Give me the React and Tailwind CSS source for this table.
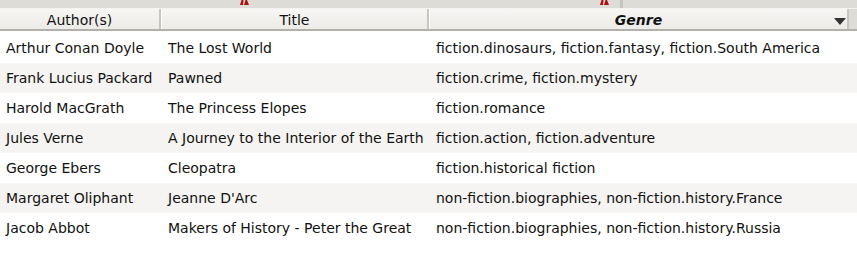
const ROWS = [
  ['Arthur Conan Doyle', 'The Lost World', 'fiction.dinosaurs, fiction.fantasy, fiction.South America'],
  ['Frank Lucius Packard', 'Pawned', 'fiction.crime, fiction.mystery'],
  ['Harold MacGrath', 'The Princess Elopes', 'fiction.romance'],
  ['Jules Verne', 'A Journey to the Interior of the Earth', 'fiction.action, fiction.adventure'],
  ['George Ebers', 'Cleopatra', 'fiction.historical fiction'],
  ['Margaret Oliphant', "Jeanne D'Arc", 'non-fiction.biographies, non-fiction.history.France'],
  ['Jacob Abbot', 'Makers of History - Peter the Great', 'non-fiction.biographies, non-fiction.history.Russia'],
]

function Marker() {
  return (
    <svg width="9" height="5" viewBox="0 0 9 5" className="block">
      <path d="M0 5 L1.5 0 L3.5 0 L3 5 Z M4 5 L5.5 0 L7 0 L9 5 Z" fill="#b01010" />
    </svg>
  )
}

export default function App() {
  return (
    <div className="w-[857px] h-[259px] bg-white text-[14px] text-[#111] overflow-hidden" style={{ fontFamily: '"DejaVu Sans", sans-serif' }}>
      {/* top strip */}
      <div className="flex h-[8px] bg-[#dedcd7]">
        <div className="w-[240px]" />
        <div className="w-[9px] flex items-start"><Marker /></div>
        <div className="w-[351px]" />
        <div className="w-[9px] flex items-start"><Marker /></div>
        <div className="w-[11px]" />
        <div className="w-[3px] bg-[#c8c5bf]" />
      </div>
      <div className="h-px bg-[#f4f3f1]" />
      {/* header */}
      <div className="flex h-[22px] bg-gradient-to-b from-[#f7f6f4] to-[#ecebe8] border-b-2 border-[#b3b0aa] text-[14px]">
        <div className="w-[161px] pt-[2px] flex items-center justify-center border-r-2 border-[#c9c6c0]">Author(s)</div>
        <div className="w-px bg-white" />
        <div className="w-[267px] pt-[2px] flex items-center justify-center border-r-2 border-[#c9c6c0]">Title</div>
        <div className="w-px bg-white" />
        <div className="w-[419px] pt-[2px] relative flex items-center justify-center border-r-2 border-[#c9c6c0]">
          <span className="font-bold italic">Genre</span>
          <svg width="12" height="7" viewBox="0 0 12 7" className="absolute right-[1px] top-[9px]">
            <path d="M0 0 L12 0 L6 7 Z" fill="#333" />
          </svg>
        </div>
        <div className="flex-1 bg-[#dedcd7]" />
      </div>
      <div className="h-[2px]" />
      <div>
        {ROWS.map((r, i) => (
          <div key={i} className={`flex h-[30px] items-center ${i % 2 ? 'bg-[#f5f4f2]' : 'bg-white'}`}>
            <div className="w-[162px] pl-[6px] whitespace-nowrap">{r[0]}</div>
            <div className="w-[268px] pl-[6px] whitespace-nowrap">{r[1]}</div>
            <div className="flex-1 pl-[6px] whitespace-nowrap">{r[2]}</div>
          </div>
        ))}
      </div>
    </div>
  )
}
